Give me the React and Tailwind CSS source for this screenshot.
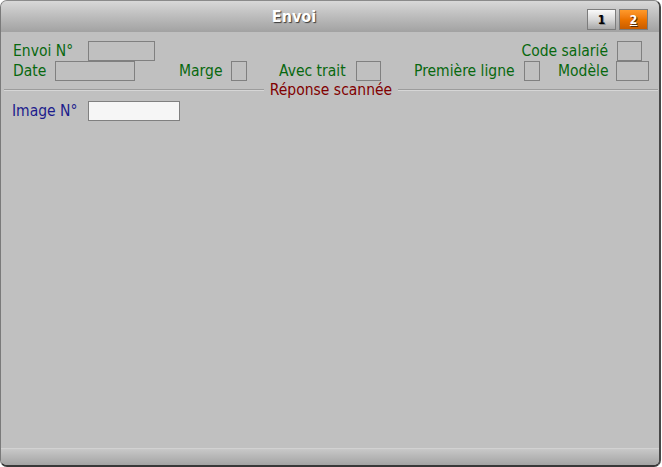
import React from "react";

const FONT = { fontFamily: "'DejaVu Sans Condensed', 'DejaVu Sans', Tahoma, sans-serif" };

function Field({ w, white }) {
  return (
    <div
      className={`h-[20px] shrink-0 border border-[#808080] ${white ? "bg-[#f6f6f6]" : ""} ${w}`}
    />
  );
}

function Label({ children, w, color = "text-[#08680f]" }) {
  return (
    <div className={`shrink-0 whitespace-nowrap text-[15.5px] leading-[20px] ${color} ${w}`}>
      {children}
    </div>
  );
}

export default function App() {
  return (
    <div className="w-[662px] h-[467px] bg-white" style={FONT}>
      <div className="w-[661px] h-[467px] flex flex-col overflow-hidden rounded-[7px] border-l border-t border-r-2 border-b-2 border-l-[#7a7a7a] border-t-[#8a8a8a] border-r-[#484848] border-b-[#383838] bg-[#c0c0c0]">
        {/* title bar */}
        <div className="h-[31px] shrink-0 flex items-start bg-gradient-to-b from-[#d8d8d8] via-[#bcbcbc] to-[#a2a2a2]">
          <div className="flex-1 text-center pt-[7px] text-[16px] leading-[18px] font-bold text-white [text-shadow:1px_1px_1px_#3a3a3a]">
            Envoi
          </div>
          <div className="flex gap-[3px] pt-[8px] pr-[11px]">
            <div className="w-[29px] h-[21px] border border-[#7c7c7c] bg-gradient-to-b from-[#fafafa] via-[#d8d8d8] to-[#a8a8a8] flex items-center justify-center text-[12px] font-bold text-black [text-shadow:1px_1px_0_#8a8a8a]">
              1
            </div>
            <div className="w-[29px] h-[21px] border border-[#7c7c7c] bg-gradient-to-b from-[#ff9a2a] via-[#ec7400] to-[#c85c00] flex items-center justify-center text-[12px] font-bold text-white underline [text-shadow:1px_1px_0_#5a2a00]">
              2
            </div>
          </div>
        </div>

        {/* body */}
        <div className="flex-1 flex flex-col pt-[9px]">
          <div className="flex items-center h-[20px] pl-[12px] pr-[17px]">
            <Label w="w-[75px]">Envoi N°</Label>
            <Field w="w-[67px]" />
            <div className="flex-1 text-right pr-[9px] text-[15.5px] leading-[20px] text-[#08680f] whitespace-nowrap">
              Code salarié
            </div>
            <Field w="w-[25px]" />
          </div>

          <div className="flex items-center h-[20px] pl-[12px]">
            <Label w="w-[42px]">Date</Label>
            <Field w="w-[80px]" />
            <Label w="w-[52px] ml-[44px]">Marge</Label>
            <Field w="w-[16px]" />
            <Label w="w-[77px] ml-[32px]">Avec trait</Label>
            <Field w="w-[25px]" />
            <Label w="w-[110px] ml-[33px]">Première ligne</Label>
            <Field w="w-[16px]" />
            <Label w="w-[58px] ml-[18px]">Modèle</Label>
            <Field w="w-[33px]" />
          </div>

          <div className="flex items-center h-[18px] pl-[3px] pr-[1px]">
            <div className="flex-1 border-t border-b border-t-[#9c9c9c] border-b-[#d6d6d6]" />
            <div className="px-[6px] text-[15.5px] leading-[18px] text-[#800000] whitespace-nowrap">
              Réponse scannée
            </div>
            <div className="flex-1 border-t border-b border-t-[#9c9c9c] border-b-[#d6d6d6]" />
          </div>

          <div className="flex items-center h-[20px] mt-[2px] pl-[11px]">
            <Label w="w-[76px]" color="text-[#1c1c8c]">Image N°</Label>
            <Field w="w-[92px]" white />
          </div>
        </div>

        {/* status bar */}
        <div className="h-[17px] shrink-0 border-t border-t-[#d2d2d2] bg-gradient-to-b from-[#c8c8c8] to-[#a4a4a4]" />
      </div>
    </div>
  );
}
